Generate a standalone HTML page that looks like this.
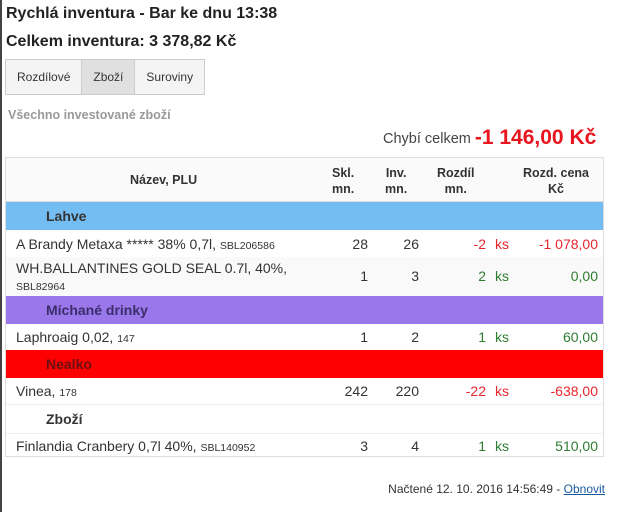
<!DOCTYPE html>
<html><head><meta charset="utf-8"><style>
body{margin:0;width:620px;height:512px;background:#fff;font-family:"Liberation Sans",Arial,sans-serif;color:#333;position:relative;overflow:hidden}
.ab{position:absolute;white-space:nowrap}
.lb{position:absolute;left:0;top:0;width:2px;height:512px;background:#444}
h1{position:absolute;left:6px;top:5px;margin:0;font-size:16px;font-weight:bold;color:#222}
h2{position:absolute;left:6px;top:33px;margin:0;font-size:16px;font-weight:bold;color:#222}
.tabs{position:absolute;left:5px;top:59px;height:34px;border:1px solid #ccc;display:flex;font-size:12px;background:#f4f4f4}
.tabs div{padding:0 11px;line-height:34px}
.tabs .a{background:#e0e0e0;border-left:1px solid #ccc;border-right:1px solid #ccc}
.sub{left:8px;top:108px;font-size:12.5px;font-weight:bold;color:#999}
.tbl{position:absolute;left:5px;top:157px;width:599px;height:300px;border:1px solid #ddd;box-sizing:border-box}
.row{position:absolute;left:0;width:597px;font-size:14px}
.g{position:absolute;font-weight:bold;left:40px;font-size:14px}
.r{position:absolute;text-align:right}
.red{color:#e8262e}.grn{color:#2e7d32}
small{font-size:10.5px}
</style></head><body>
<div class="lb"></div>
<h1>Rychlá inventura - Bar ke dnu 13:38</h1>
<h2>Celkem inventura: 3 378,82 Kč</h2>
<div class="tabs"><div>Rozdílové</div><div class="a">Zboží</div><div>Suroviny</div></div>
<div class="ab sub">Všechno investované zboží</div>
<div class="ab" style="left:383px;top:125px;font-size:14.5px;color:#444">Chybí celkem <span style="color:#e8141e;font-weight:bold;font-size:21px;position:relative;top:1px">-1 146,00 Kč</span></div>
<div class="tbl">
 <div class="row" style="top:0;height:43px;background:#fafafa;border-bottom:1px solid #ddd;font-weight:bold;font-size:12.5px">
  <div class="ab" style="left:124px;top:15px">Název, PLU</div>
  <div class="ab" style="left:326px;top:7px;text-align:center;line-height:16px">Skl.<br>mn.</div>
  <div class="ab" style="left:379px;top:7px;text-align:center;line-height:16px">Inv.<br>mn.</div>
  <div class="ab" style="left:431px;top:7px;text-align:center;line-height:16px">Rozdíl<br>mn.</div>
  <div class="ab" style="left:517px;top:7px;text-align:center;line-height:16px">Rozd. cena<br>Kč</div>
 </div>
 <div class="row" style="top:44px;height:28px;background:#74bdf2"><div class="g" style="top:6px">Lahve</div></div>
 <div class="row" style="top:72px;height:27px;border-bottom:1px solid #eee">
  <div class="ab" style="left:10px;top:6px">A Brandy Metaxa ***** 38% 0,7l, <small>SBL206586</small></div>
  <div class="r ab" style="right:235px;top:6px">28</div><div class="r ab" style="right:184px;top:6px">26</div>
  <div class="r ab red" style="right:117px;top:6px">-2</div><div class="ab red" style="left:489px;top:6px">ks</div>
  <div class="r ab red" style="right:5px;top:6px">-1 078,00</div>
 </div>
 <div class="row" style="top:99px;height:39px;background:#f9f9f9">
  <div class="ab" style="left:10px;top:3px;line-height:17px">WH.BALLANTINES GOLD SEAL 0.7l, 40%,<br><small>SBL82964</small></div>
  <div class="r ab" style="right:235px;top:11px">1</div><div class="r ab" style="right:184px;top:11px">3</div>
  <div class="r ab grn" style="right:117px;top:11px">2</div><div class="ab grn" style="left:489px;top:11px">ks</div>
  <div class="r ab grn" style="right:5px;top:11px">0,00</div>
 </div>
 <div class="row" style="top:138px;height:28px;background:#9a78ec"><div class="g" style="top:6px;color:#3b2d6a">Míchané drinky</div></div>
 <div class="row" style="top:166px;height:26px">
  <div class="ab" style="left:10px;top:5px">Laphroaig 0,02, <small>147</small></div>
  <div class="r ab" style="right:235px;top:5px">1</div><div class="r ab" style="right:184px;top:5px">2</div>
  <div class="r ab grn" style="right:117px;top:5px">1</div><div class="ab grn" style="left:489px;top:5px">ks</div>
  <div class="r ab grn" style="right:5px;top:5px">60,00</div>
 </div>
 <div class="row" style="top:192px;height:28px;background:#fe0000"><div class="g" style="top:6px;color:#6a1010">Nealko</div></div>
 <div class="row" style="top:220px;height:26px;border-bottom:1px solid #eee">
  <div class="ab" style="left:10px;top:5px">Vinea, <small>178</small></div>
  <div class="r ab" style="right:235px;top:5px">242</div><div class="r ab" style="right:184px;top:5px">220</div>
  <div class="r ab red" style="right:117px;top:5px">-22</div><div class="ab red" style="left:489px;top:5px">ks</div>
  <div class="r ab red" style="right:5px;top:5px">-638,00</div>
 </div>
 <div class="row" style="top:247px;height:28px;background:#fff;border-bottom:1px solid #eee"><div class="g" style="top:6px">Zboží</div></div>
 <div class="row" style="top:276px;height:23px">
  <div class="ab" style="left:10px;top:4px">Finlandia Cranbery 0,7l 40%, <small>SBL140952</small></div>
  <div class="r ab" style="right:235px;top:4px">3</div><div class="r ab" style="right:184px;top:4px">4</div>
  <div class="r ab grn" style="right:117px;top:4px">1</div><div class="ab grn" style="left:489px;top:4px">ks</div>
  <div class="r ab grn" style="right:5px;top:4px">510,00</div>
 </div>
</div>
<div class="ab" style="right:15px;top:482px;font-size:12px;color:#333">Načtené 12. 10. 2016 14:56:49 - <span style="color:#1a5aa0;text-decoration:underline">Obnovit</span></div>
</body></html>
